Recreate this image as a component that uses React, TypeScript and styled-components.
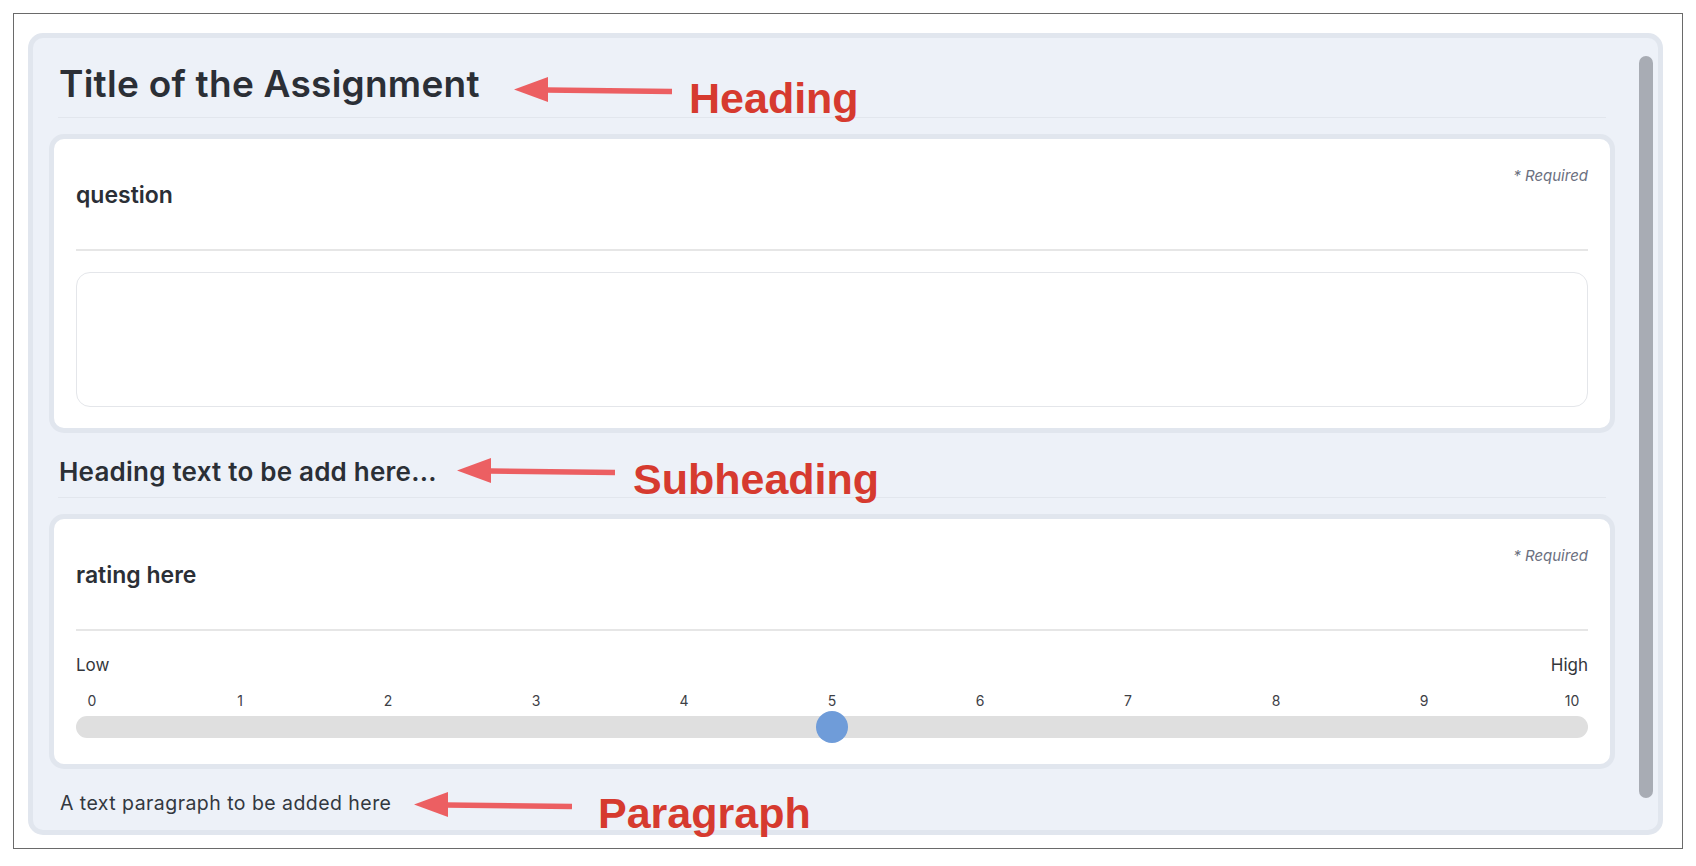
import React from "react";
import styled, { createGlobalStyle } from "styled-components";

const GlobalStyle = createGlobalStyle`
  html, body { margin: 0; padding: 0; background: #ffffff; }
  body {
    font-family: Inter, "Noto Sans", "Liberation Sans", sans-serif;
    color: #2b2f36;
  }
  * { box-sizing: border-box; }
`;

const Frame = styled.div`
  position: relative;
  margin: 13px 13px 0 13px;
  height: 836px;
  border: 1px solid #6a6a6a;
  padding: 19px 19px 13px 14px;
  display: flex;
`;

const Panel = styled.div`
  flex: 1;
  display: flex;
  gap: 24px;
  border: 5px solid #e1e6ee;
  border-radius: 15px;
  background: #edf1f8;
  padding: 0 5px 0 16px;
  overflow: hidden;
`;

const Content = styled.div`
  flex: 1;
  min-width: 0;
  display: flex;
  flex-direction: column;
  padding-top: 23px;
  overflow: hidden;
`;

const ScrollTrack = styled.div`
  width: 14px;
  display: flex;
  flex-direction: column;
  padding: 18px 0 32px;
`;

const ScrollThumb = styled.div`
  flex: 1;
  border-radius: 7px;
  background: #a8acb4;
`;

const Heading = styled.h1`
  margin: 0 9px;
  padding: 0 0 11px 1px;
  font-size: 37px;
  line-height: 45px;
  font-weight: 600;
  letter-spacing: 0.25px;
  color: #2b2f36;
  border-bottom: 1px solid #e2e6ed;
`;

const SubHeading = styled.h2`
  margin: 24px 9px 0;
  padding: 0 0 10px 1px;
  font-size: 26px;
  line-height: 30px;
  font-weight: 600;
  letter-spacing: 0.22px;
  color: #2b2f36;
  border-bottom: 1px solid #e2e6ed;
`;

const Paragraph = styled.p`
  margin: 22px 11px 0;
  font-size: 19.5px;
  line-height: 24px;
  font-weight: 400;
  letter-spacing: 0.45px;
  color: #33383f;
`;

const Card = styled.section`
  margin-top: 16px;
  border: 5px solid #e1e6ee;
  border-radius: 15px;
  background: #ffffff;
  padding: 22px 22px 21px;
  display: flex;
  flex-direction: column;
`;

const CardHeader = styled.div`
  display: flex;
  flex-direction: column;
`;

const RequiredTag = styled.span`
  align-self: flex-end;
  margin-top: 8px;
  font-size: 15px;
  line-height: 14px;
  font-style: italic;
  color: #6b7080;
`;

const QuestionTitle = styled.div`
  font-size: 23px;
  line-height: 24px;
  font-weight: 600;
  color: #2b2f36;
`;

const Divider = styled.div`
  margin-top: 42px;
  height: 2px;
  background: #e6e6e6;
`;

const AnswerBox = styled.div`
  margin-top: 21px;
  height: 135px;
  border: 1px solid #e4e6ea;
  border-radius: 14px;
  background: #ffffff;
`;

const ScaleLabels = styled.div`
  margin-top: 24px;
  display: flex;
  justify-content: space-between;
  font-size: 17px;
  line-height: 20px;
  color: #33363b;
`;

const Ticks = styled.div`
  margin-top: 18px;
  display: flex;
  justify-content: space-between;
  padding: 0 16px;
  font-size: 14px;
  line-height: 16px;
  color: #3d4046;
`;

const Tick = styled.span`
  width: 0;
  display: flex;
  justify-content: center;
  white-space: nowrap;
`;

const SliderBox = styled.div`
  position: relative;
  margin-top: 2px;
  height: 32px;
  display: flex;
  align-items: center;
`;

const Track = styled.div`
  width: 100%;
  height: 22px;
  border-radius: 11px;
  background: #dfdfdf;
`;

const Thumb = styled.div<{ $ratio: number }>`
  position: absolute;
  top: 0;
  left: calc((100% - 32px) * ${(p) => p.$ratio});
  width: 32px;
  height: 32px;
  border-radius: 50%;
  background: #6f9cd9;
`;

const Annotation = styled.div<{ $x: number; $y: number; $gap: number; $arrowTop: number }>`
  position: absolute;
  left: ${(p) => p.$x}px;
  top: ${(p) => p.$y}px;
  display: flex;
  align-items: flex-start;
  gap: ${(p) => p.$gap}px;
  pointer-events: none;
  svg {
    margin-top: ${(p) => p.$arrowTop}px;
    flex: none;
  }
`;

const AnnotationLabel = styled.span`
  font-family: "Liberation Sans", Arial, sans-serif;
  font-weight: 700;
  font-size: 43px;
  line-height: 43px;
  color: #d63a2f;
  white-space: nowrap;
`;

const Arrow = () => (
  <svg width="158" height="25" viewBox="0 0 158 25">
    <polygon points="0,12.5 34,0 34,25" fill="#ec5f62" />
    <line x1="32" y1="13" x2="158" y2="14.6" stroke="#ec5f62" strokeWidth="5.5" />
  </svg>
);

const ticks = [0, 1, 2, 3, 4, 5, 6, 7, 8, 9, 10];
const rating = { min: 0, max: 10, value: 5 };

export default function App() {
  const ratio = (rating.value - rating.min) / (rating.max - rating.min);
  return (
    <>
      <GlobalStyle />
      <Frame>
        <Panel>
          <Content>
            <Heading>Title of the Assignment</Heading>
            <Card>
              <CardHeader>
                <RequiredTag>* Required</RequiredTag>
                <QuestionTitle>question</QuestionTitle>
              </CardHeader>
              <Divider />
              <AnswerBox />
            </Card>
            <SubHeading>Heading text to be add here...</SubHeading>
            <Card>
              <CardHeader>
                <RequiredTag>* Required</RequiredTag>
                <QuestionTitle>rating here</QuestionTitle>
              </CardHeader>
              <Divider />
              <ScaleLabels>
                <span>Low</span>
                <span>High</span>
              </ScaleLabels>
              <Ticks>
                {ticks.map((t) => (
                  <Tick key={t}>{t}</Tick>
                ))}
              </Ticks>
              <SliderBox>
                <Track />
                <Thumb $ratio={ratio} />
              </SliderBox>
            </Card>
            <Paragraph>A text paragraph to be added here</Paragraph>
          </Content>
          <ScrollTrack>
            <ScrollThumb />
          </ScrollTrack>
        </Panel>
        <Annotation $x={500} $y={63} $gap={17} $arrowTop={0}>
          <Arrow />
          <AnnotationLabel>Heading</AnnotationLabel>
        </Annotation>
        <Annotation $x={443} $y={444} $gap={18} $arrowTop={0}>
          <Arrow />
          <AnnotationLabel>Subheading</AnnotationLabel>
        </Annotation>
        <Annotation $x={400} $y={778} $gap={26} $arrowTop={0}>
          <Arrow />
          <AnnotationLabel>Paragraph</AnnotationLabel>
        </Annotation>
      </Frame>
    </>
  );
}
